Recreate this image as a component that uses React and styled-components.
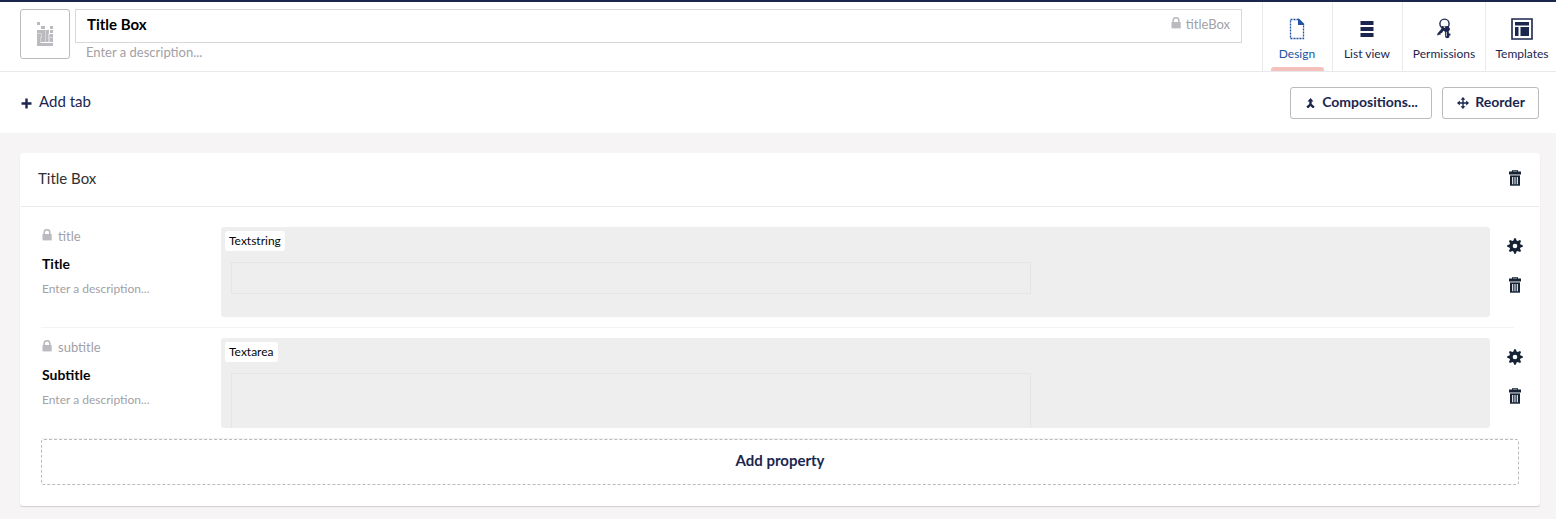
import React from "react";
import styled, { createGlobalStyle, css } from "styled-components";

const navy = "#1b264f";
const ink = "#162335";
const muted = "#a2a1a6";

const GlobalStyle = createGlobalStyle`
  *, *::before, *::after { box-sizing: border-box; }
  body {
    margin: 0;
    background: #f6f4f4;
    font-family: Lato, "Open Sans", sans-serif;
    font-size: 15px;
    line-height: 20px;
    color: #303033;
    overflow: hidden;
  }
  button { font: inherit; margin: 0; padding: 0; border: 0; background: none; color: inherit; }
  svg { display: block; flex: none; }
`;

const Page = styled.div`
  display: flex;
  flex-direction: column;
  height: 519px;
  border-top: 2px solid ${navy};
`;

const Header = styled.header`
  display: flex;
  height: 70px;
  padding-left: 20px;
  background: #fff;
  border-bottom: 1px solid #e9e9eb;
`;

const IconButton = styled.button`
  display: flex;
  align-items: center;
  justify-content: center;
  width: 50px;
  height: 50px;
  margin: 7px 5px 0 0;
  border: 1px solid #bbbabf;
  border-radius: 3px;
`;

const NameArea = styled.div`
  flex: 1;
  padding-top: 7px;
`;

const NameField = styled.div`
  display: flex;
  align-items: center;
  justify-content: space-between;
  height: 34px;
  padding: 0 11px 4px;
  border: 1px solid #d8d7d9;
  color: #000;
  font-weight: 700;
`;

const HeaderDescription = styled.div`
  margin-top: -1px;
  padding-left: 11px;
  color: ${muted};
  font-size: 13px;
`;

const Alias = styled.div`
  display: flex;
  align-items: center;
  gap: ${(p) => p.$gap ?? 5}px;
  color: ${muted};
  font-size: 13px;
  font-weight: 400;
  svg { margin-top: -3px; }
`;

const Tabs = styled.nav`
  display: flex;
  margin-left: 20px;
`;

const Tab = styled.button`
  display: flex;
  flex-direction: column;
  align-items: center;
  width: ${(p) => p.$width}px;
  padding: 16px ${(p) => (p.$shift < 0 ? -p.$shift : 0)}px 0 ${(p) => (p.$shift > 0 ? p.$shift : 0)}px;
  border-left: 1px solid #e9e9eb;
  color: ${(p) => (p.$active ? "#2152a3" : navy)};
  font-size: 12px;
  white-space: nowrap;
  svg { margin-bottom: 4px; }
  ${(p) =>
    p.$active &&
    css`
      &::after {
        content: "";
        width: 53px;
        height: 4px;
        margin-top: auto;
        border-radius: 3px 3px 0 0;
        background: #f5c1bc;
      }
    `}
`;

const Toolbar = styled.div`
  display: flex;
  align-items: center;
  gap: 10px;
  height: 61px;
  padding: 0 17px 0 21px;
  background: #fff;
  color: ${navy};
`;

const AddTab = styled.button`
  display: flex;
  align-items: center;
  gap: 7px;
  margin-right: auto;
  padding-bottom: 3px;
  svg { margin-top: 4px; }
`;

const OutlineButton = styled.button`
  display: flex;
  align-items: center;
  justify-content: center;
  gap: ${(p) => p.$gap}px;
  width: ${(p) => p.$width}px;
  height: 32px;
  padding: 0 0 2px 1px;
  border: 1px solid #bbbabf;
  border-radius: 3px;
  font-size: 14px;
  font-weight: 700;
  svg { margin-top: 2px; }
`;

const Card = styled.section`
  margin: 20px 16px 0 20px;
  height: 353px;
  background: #fff;
  border-radius: 3px;
  box-shadow: 0 1px 1px 0 rgba(0, 0, 0, 0.16);
`;

const CardHeader = styled.div`
  display: flex;
  align-items: center;
  justify-content: space-between;
  height: 54px;
  margin: 0 1px;
  padding: 0 18px 3px 17px;
  border-bottom: 1px solid #e9e9eb;
`;

const Properties = styled.div`
  padding: 10px 21px 0;
`;

const Property = styled.div`
  display: flex;
  height: 111px;
  margin-right: 5px;
  padding: 10px 0;
  border-bottom: 1px solid #f3f3f5;
`;

const PropertyInfo = styled.div`
  flex: none;
  width: 180px;
  margin-top: -1px;
  padding-left: 1px;
`;

const PropertyName = styled.div`
  margin-top: 8px;
  color: #060606;
  font-size: 14px;
  font-weight: 700;
`;

const PropertyDescription = styled.div`
  margin-top: 5px;
  color: ${muted};
  font-size: 12px;
`;

const Preview = styled.div`
  flex: none;
  width: 1269px;
  height: 90px;
  padding: 4px 4px 0;
  border-radius: 3px;
  background: #eee;
  overflow: hidden;
`;

const EditorLabel = styled.span`
  display: block;
  width: fit-content;
  height: 20px;
  padding: 0 4px;
  border-radius: 3px;
  background: #fff;
  color: #060606;
  font-size: 12px;
`;

const EditorField = styled.div`
  width: 800px;
  height: ${(p) => p.$height}px;
  margin: 11px 0 0 6px;
  border: 1px solid #e5e5e5;
`;

const Actions = styled.div`
  display: flex;
  flex: none;
  flex-direction: column;
  align-items: center;
  gap: 23px;
  width: 16px;
  margin-left: 17px;
  padding-top: 11px;
`;

const AddProperty = styled.button`
  display: block;
  width: 1478px;
  height: 46px;
  padding-bottom: 4px;
  border: 1px dashed #bbbabf;
  border-radius: 3px;
  color: ${navy};
  font-size: 15px;
  font-weight: 700;
`;

const Lock = () => (
  <svg width="10" height="12" viewBox="0 0 10 12">
    <path d="M2.2 6V3.5a2.8 2.8 0 0 1 5.6 0V6" fill="none" stroke="#bbbabf" strokeWidth="1.6" />
    <path d="M.5 5h9.2v6.4H.5z" fill="#bbbabf" />
  </svg>
);

const Trash = () => (
  <svg width="12" height="16" viewBox="0 0 12 16">
    <path d="M3 1.5V.2h6v1.3h3v3H0v-3z" fill={ink} />
    <path d="M1 5.4h10v10.3H1z" fill={ink} />
    <path d="M3 7h1.2v7.3H3zM7.8 7H9v7.3H7.8z" fill="#d5d8dd" />
    <path d="M4.2 7h.8v7.3h-.8zM7 7h.8v7.3H7z" fill="#4b5563" />
    <path d="M5 7h2v7.3H5z" fill="#8b929d" />
    <path d="M4 1h4v.7H4z" fill="#8b929d" />
  </svg>
);

const Gear = () => (
  <svg width="16" height="16" viewBox="0 0 16 16">
    <g fill={ink}>
      {[0, 45, 90, 135].map((angle) => (
        <path key={angle} d="M7.2.2h1.6l1 3v9.6l-1 3H7.2l-1-3V3.2z" transform={`rotate(${angle} 8 8)`} />
      ))}
      <circle cx="8" cy="8" r="5.7" />
    </g>
    <circle cx="8" cy="8" r="2.3" fill="#fff" />
  </svg>
);

const DesignIcon = () => (
  <svg width="22" height="22" viewBox="0 0 22 22">
    <path d="M12.5 1.5h-8v19h13V7" fill="none" stroke="#2152a3" strokeWidth="1.3" strokeDasharray="2 1" />
    <path d="M12 .8h1.2l5 5V7H12z" fill="#2152a3" />
  </svg>
);

const ListIcon = () => (
  <svg width="22" height="22" viewBox="0 0 22 22">
    <path d="M4.5 3h13v4h-13zM4.5 9h13v4h-13zM4.5 15h13v4h-13z" fill={navy} />
  </svg>
);

const KeysIcon = () => (
  <svg width="22" height="22" viewBox="0 0 22 22">
    <circle cx="11.5" cy="5.7" r="4.6" fill="none" stroke={navy} strokeWidth="1.4" />
    <path d="M8.6 7.8l3.9 1.2.3 3.2-2.7.8-1.1 2.1-1.2-.2-.5 2-1.3-.3-1.2 1.1-.7-1.6 4.2-5z" fill={navy} />
    <path d="M12 8.2l3.4-.2 1.8 3.2-1.6 2.2.4 2 1.6.4-.3 1.6-1.2.3.3 1.8-2.5.8-1.7-1.1-.3-5.2-1.7-2.4z" fill={navy} />
    <path d="M13.4 13.8v4.5M10.8 9.5h1.4" stroke="#fff" strokeWidth=".7" />
  </svg>
);

const TemplatesIcon = () => (
  <svg width="22" height="22" viewBox="0 0 22 22">
    <path d="M1 1h20v20H1z" fill="none" stroke={navy} strokeWidth="1.6" />
    <path d="M4 4h14v3.5H4zM4 9h3.5v9H4zM9.5 9H18v9H9.5z" fill={navy} />
  </svg>
);

const PlusIcon = () => (
  <svg width="11" height="11" viewBox="0 0 11 11">
    <path d="M5.5.5v10M.5 5.5h10" stroke={navy} strokeWidth="2.4" />
  </svg>
);

const MergeIcon = () => (
  <svg width="10" height="12" viewBox="0 0 10 12">
    <path d="M5.5 1L8.5 4.5H6.7v2.6l2.9 2.4-1 1.5H7.5l-2-2-2 2H2.4l-1-1.5 2.9-2.4V4.5H2.5z" fill={navy} />
  </svg>
);

const MoveIcon = () => (
  <svg width="12" height="12" viewBox="0 0 12 12">
    <path d="M6 0l2.4 2.8H6.7v2.5h2.5V3.6L12 6 9.2 8.4V6.7H6.7v2.5h1.7L6 12 3.6 9.2h1.7V6.7H2.8v1.7L0 6l2.8-2.4v1.7h2.5V2.8H3.6z" fill={navy} />
  </svg>
);

const pixels = [
  [0, 0, 3, 3], [4, 4, 4, 3], [13, 4, 3, 3], [0, 8, 4, 3], [4, 8, 4, 3], [9, 8, 3, 3], [13, 8, 3, 3],
  [0, 12, 4, 3], [5, 11, 3, 9], [9, 9, 2, 11], [13, 12, 3, 3], [0, 15, 3, 9], [13, 16, 3, 4], [4, 16, 1, 4], [0, 21, 16, 3],
];

const PixelIcon = () => (
  <svg width="16" height="24" viewBox="0 0 16 24">
    {pixels.map(([x, y, width, height]) => (
      <rect key={`${x}-${y}`} x={x} y={y} width={width} height={height} fill="#bbbabf" />
    ))}
    <path d="M0 8h4v13H0zM4 8h8v12H4zM12 12h4v8h-4z" fill="#bbbabf" opacity=".6" />
  </svg>
);

const tabs = [
  { label: "Design", width: 70, Icon: DesignIcon, active: true, shift: -1 },
  { label: "List view", width: 70, Icon: ListIcon, shift: -1 },
  { label: "Permissions", width: 83, Icon: KeysIcon, shift: 0 },
  { label: "Templates", width: 71, Icon: TemplatesIcon, shift: 2 },
];

const properties = [
  { alias: "title", name: "Title", editor: "Textstring", height: 32 },
  { alias: "subtitle", name: "Subtitle", editor: "Textarea", height: 90 },
];

export default function App() {
  return (
    <Page>
      <GlobalStyle />
      <Header>
        <IconButton><PixelIcon /></IconButton>
        <NameArea>
          <NameField>
            Title Box
            <Alias><Lock />titleBox</Alias>
          </NameField>
          <HeaderDescription>Enter a description...</HeaderDescription>
        </NameArea>
        <Tabs>
          {tabs.map(({ label, width, Icon, active, shift }) => (
            <Tab key={label} $width={width} $active={active} $shift={shift}>
              <Icon />
              {label}
            </Tab>
          ))}
        </Tabs>
      </Header>
      <Toolbar>
        <AddTab><PlusIcon />Add tab</AddTab>
        <OutlineButton $width={142} $gap={7}><MergeIcon />Compositions...</OutlineButton>
        <OutlineButton $width={97} $gap={6}><MoveIcon />Reorder</OutlineButton>
      </Toolbar>
      <Card>
        <CardHeader>
          Title Box
          <Trash />
        </CardHeader>
        <Properties>
          {properties.map(({ alias, name, editor, height }) => (
            <Property key={alias}>
              <PropertyInfo>
                <Alias $gap={6}><Lock />{alias}</Alias>
                <PropertyName>{name}</PropertyName>
                <PropertyDescription>Enter a description...</PropertyDescription>
              </PropertyInfo>
              <Preview>
                <EditorLabel>{editor}</EditorLabel>
                <EditorField $height={height} />
              </Preview>
              <Actions>
                <Gear />
                <Trash />
              </Actions>
            </Property>
          ))}
          <AddProperty>Add property</AddProperty>
        </Properties>
      </Card>
    </Page>
  );
}
